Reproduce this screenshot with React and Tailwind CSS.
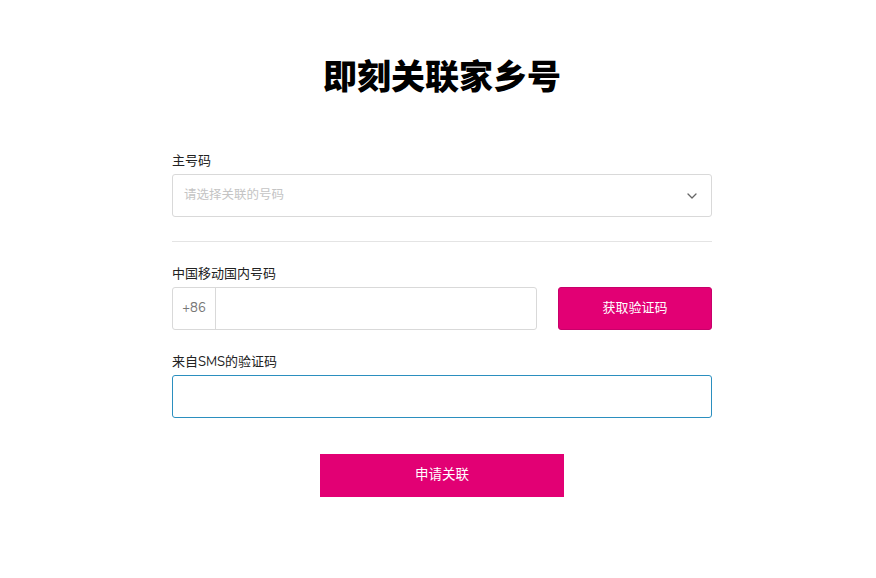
export default function App() {
  const font = { fontFamily: '"Nunito", "Lato", "Noto Sans CJK SC", sans-serif' };
  return (
    <div className="min-h-[578px] w-full bg-white pl-[8px] text-black" style={font}>
      <div className="mx-auto w-[540px] pt-[50px]">
        <h1 className="text-center text-[34px] leading-[50px] font-black" style={{ fontFamily: '"Noto Sans CJK SC", sans-serif' }}>
          即刻关联家乡号
        </h1>

        <div className="mt-[52px]">
          <label className="block text-[13px] leading-[18px] text-[#222]">主号码</label>
          <div className="mt-[4px] flex h-[43px] items-center justify-between rounded-[3px] border border-[#d9d9d9] pl-[11px] pr-[14px]">
            <span className="text-[12.5px] text-[#c4c4c4]">请选择关联的号码</span>
            <svg width="10" height="6" viewBox="0 0 10 6" fill="none">
              <path d="M1 1l4 4 4-4" stroke="#666" strokeWidth="1.3" strokeLinecap="round" strokeLinejoin="round" />
            </svg>
          </div>
        </div>

        <div className="mt-[24px] h-px bg-[#e4e4e4]" />

        <div className="mt-[23px]">
          <label className="block text-[13px] leading-[18px] text-[#222]">中国移动国内号码</label>
          <div className="mt-[4px] flex h-[43px] gap-[21px]">
            <div className="flex flex-1 rounded-[3px] border border-[#d9d9d9]">
              <div className="flex w-[43px] items-center justify-center border-r border-[#d9d9d9] text-[13px] text-[#777]">+86</div>
              <div className="flex-1" />
            </div>
            <button className="flex w-[154px] items-center justify-center rounded-[3px] border border-[#c8006a] bg-[#e20074] text-[13px] text-white">
              获取验证码
            </button>
          </div>
        </div>

        <div className="mt-[23px]">
          <label className="block text-[13px] leading-[18px] text-[#222]">来自SMS的验证码</label>
          <div className="mt-[4px] h-[43px] rounded-[3px] border border-[#2b8fbf]" />
        </div>

        <div className="mt-[36px] flex justify-center">
          <button className="flex h-[43px] w-[244px] items-center justify-center bg-[#e20074] text-[13.5px] text-white">
            申请关联
          </button>
        </div>
      </div>
    </div>
  );
}
